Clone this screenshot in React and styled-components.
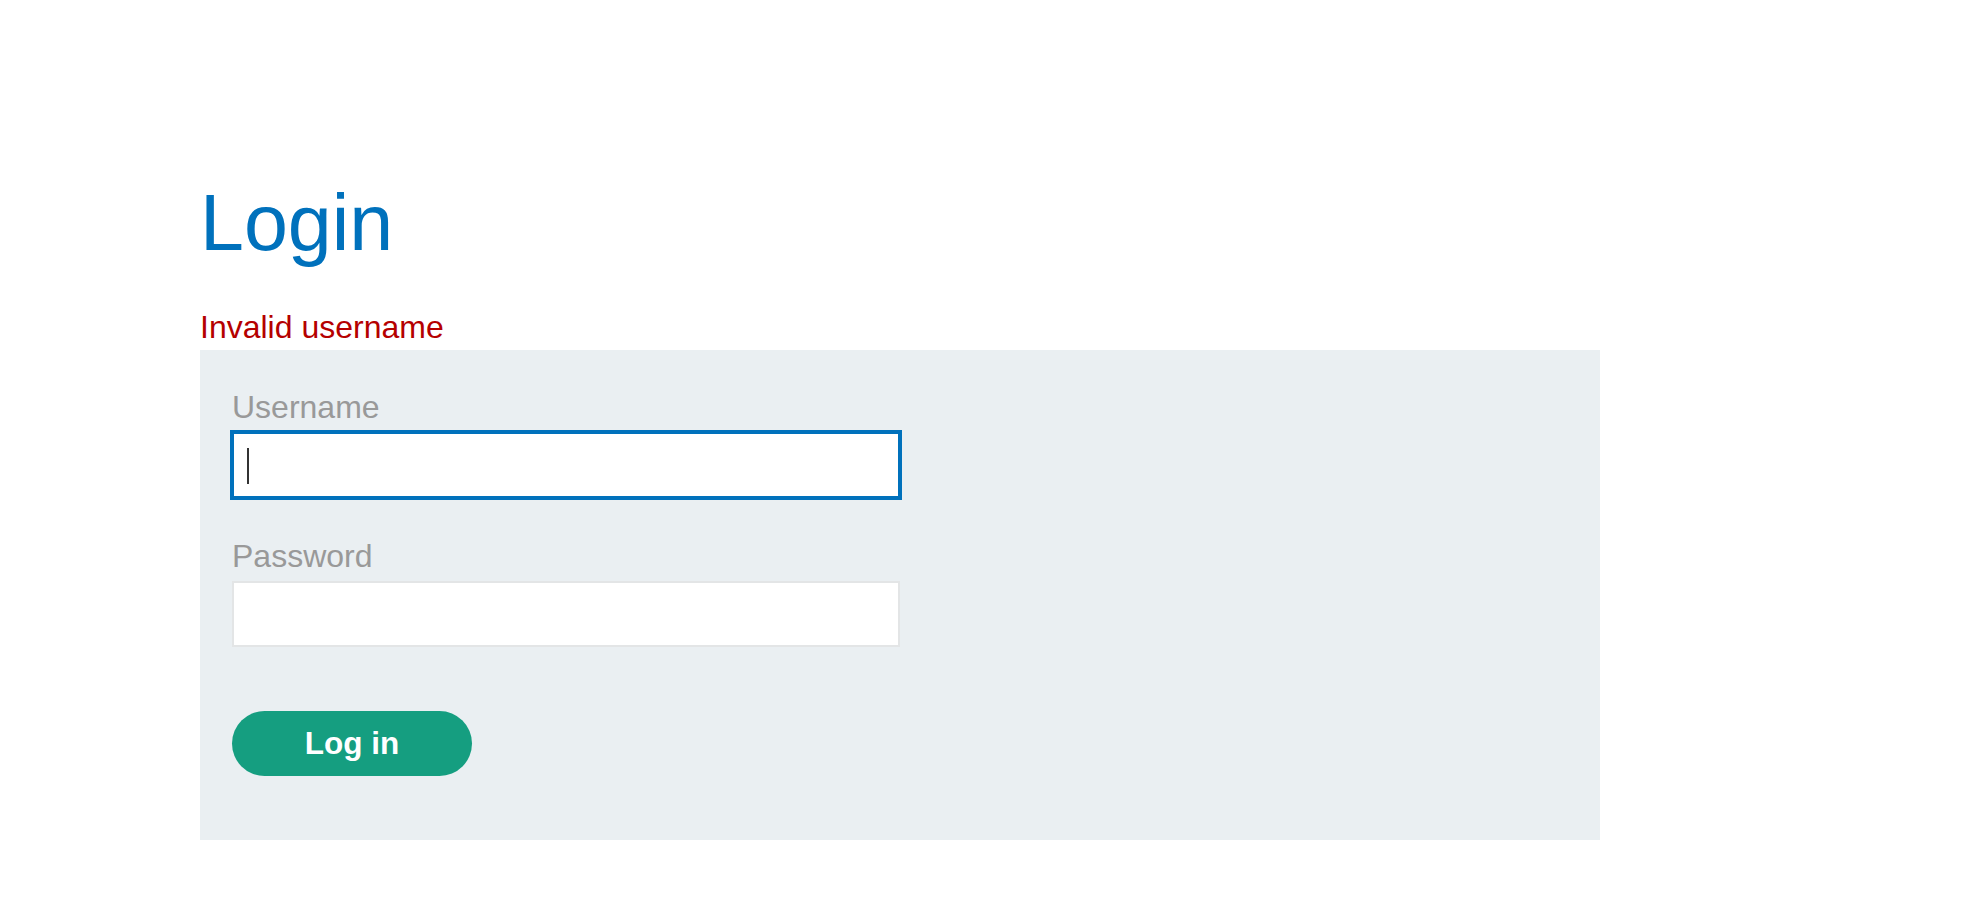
import React from "react";
import styled, { createGlobalStyle } from "styled-components";

const GlobalStyle = createGlobalStyle`
  html, body {
    margin: 0;
    padding: 0;
    background: #ffffff;
    font-family: "Liberation Sans", Arial, sans-serif;
  }
`;

const Page = styled.main`
  padding: 183px 0 0 200px;
  width: 1400px;
`;

const Title = styled.h1`
  margin: 0;
  font-size: 79px;
  line-height: 79px;
  font-weight: 400;
  color: #0071bc;
`;

const ErrorText = styled.p`
  margin: 47px 0 5px;
  font-size: 32px;
  line-height: 36px;
  color: #b50000;
`;

const Panel = styled.form`
  background: #eaeff2;
  padding: 39px 32px 64px;
  display: flex;
  flex-direction: column;
  align-items: flex-start;
`;

const Label = styled.label`
  display: block;
  font-size: 32px;
  line-height: 36px;
  color: #999999;
  margin-bottom: 7px;
`;

const Field = styled.div`
  position: relative;
  margin-bottom: ${(p) => p.$gap}px;
`;

const Input = styled.input`
  display: block;
  box-sizing: border-box;
  width: 668px;
  height: 66px;
  padding: 0 15px;
  border: 2px solid ${(p) => (p.$focused ? "#0071bc" : "#e3e5e6")};
  box-shadow: ${(p) => (p.$focused ? "0 0 0 2px #0071bc" : "none")};
  background: #ffffff;
  font-family: inherit;
  font-size: 28px;
  outline: none;
`;

const Caret = styled.span`
  position: absolute;
  left: 15px;
  top: 16px;
  width: 2px;
  height: 36px;
  background: #333333;
`;

const Button = styled.button`
  box-sizing: border-box;
  width: 240px;
  height: 65px;
  border: none;
  border-radius: 33px;
  background: #159e80;
  color: #ffffff;
  font-family: inherit;
  font-size: 31.5px;
  font-weight: 700;
  cursor: pointer;
`;

export default function App() {
  return (
    <>
      <GlobalStyle />
      <Page>
        <Title>Login</Title>
        <ErrorText>Invalid username</ErrorText>
        <Panel onSubmit={(e) => e.preventDefault()}>
          <Label htmlFor="username">Username</Label>
          <Field $gap={40}>
            <Input id="username" type="text" $focused />
            <Caret />
          </Field>
          <Label htmlFor="password">Password</Label>
          <Field $gap={64}>
            <Input id="password" type="password" />
          </Field>
          <Button type="submit">Log in</Button>
        </Panel>
      </Page>
    </>
  );
}
